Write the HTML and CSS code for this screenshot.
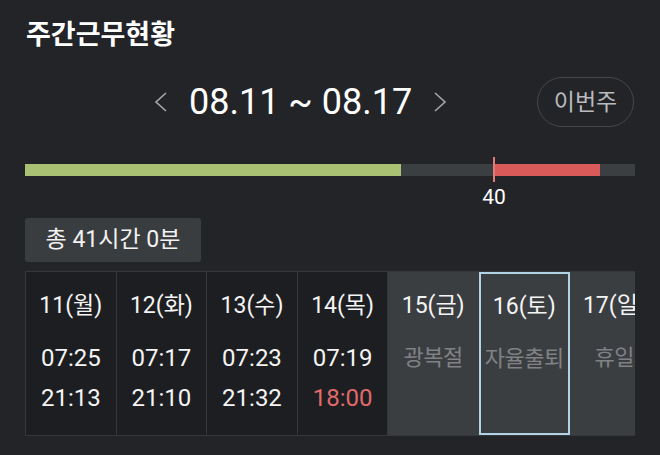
FILE: index.html
```html
<!DOCTYPE html>
<html lang="ko">
<head>
<meta charset="utf-8">
<link rel="stylesheet" href="styles.css">
</head>
<body>
<div class="page">
  <h1 class="title">주간근무현황</h1>

  <div class="nav-row">
    <div class="nav">
      <svg class="chev" width="14" height="22" viewBox="0 0 14 22"><polyline points="12,2 2,11 12,20" fill="none" stroke="#a7a8ab" stroke-width="1.6"/></svg>
      <span class="range">08.11 ~ 08.17</span>
      <svg class="chev" width="14" height="22" viewBox="0 0 14 22"><polyline points="2,2 12,11 2,20" fill="none" stroke="#a7a8ab" stroke-width="1.6"/></svg>
    </div>
    <button class="this-week">이번주</button>
  </div>

  <div class="bar">
    <div class="seg green" style="width:376px"></div>
    <div class="seg track" style="width:93px"></div>
    <div class="seg red" style="width:106px"></div>
    <div class="seg track rest"></div>
    <div class="marker" style="left:468px"><span class="marker-label">40</span></div>
  </div>

  <div class="total">총 41시간 0분</div>

  <div class="week">
    <div class="day">
      <div class="dname">11(월)</div>
      <div class="t">07:25</div>
      <div class="t">21:13</div>
    </div>
    <div class="day">
      <div class="dname">12(화)</div>
      <div class="t">07:17</div>
      <div class="t">21:10</div>
    </div>
    <div class="day">
      <div class="dname">13(수)</div>
      <div class="t">07:23</div>
      <div class="t">21:32</div>
    </div>
    <div class="day">
      <div class="dname">14(목)</div>
      <div class="t">07:19</div>
      <div class="t late">18:00</div>
    </div>
    <div class="day off">
      <div class="dname">15(금)</div>
      <div class="t note">광복절</div>
    </div>
    <div class="day off selected">
      <div class="dname">16(토)</div>
      <div class="t note">자율출퇴</div>
    </div>
    <div class="day off">
      <div class="dname">17(일)</div>
      <div class="t note">휴일</div>
    </div>
  </div>
</div>
</body>
</html>
```
FILE: styles.css
```css
* { box-sizing: border-box; }
html, body {
  margin: 0;
  padding: 0;
  background: #232428;
}
body {
  width: 660px;
  height: 455px;
  overflow: hidden;
  font-family: Roboto, "Noto Sans CJK KR", sans-serif;
  color: #f2f2f2;
}
.page {
  padding: 22px 25px 0 25px;
}
.title {
  margin: 0 0 0 1px;
  font-size: 27px;
  line-height: 26px;
  font-weight: 700;
  color: #ffffff;
}
.nav-row {
  margin-top: 29px;
  display: flex;
  align-items: center;
  justify-content: space-between;
  height: 50px;
}
.nav {
  display: flex;
  align-items: center;
  padding-left: 129px;
  gap: 21px;
}
.chev { display: block; }
.range {
  font-size: 36px;
  line-height: 40px;
  color: #ffffff;
}
.this-week {
  width: 97px;
  height: 50px;
  margin-right: 1px;
  border: 1.5px solid #46474b;
  border-radius: 25px;
  background: transparent;
  color: #b9babd;
  font-family: Roboto, "Noto Sans CJK KR", sans-serif;
  font-size: 23px;
  line-height: 1;
  padding: 0;
}
.bar {
  position: relative;
  margin-top: 37px;
  height: 12px;
  width: 610px;
  display: flex;
}
.seg { height: 12px; }
.green { background: #a8c172; }
.red { background: #da5a59; }
.track { background: #3c3f42; }
.rest { flex: 1; }
.marker {
  position: absolute;
  top: -7px;
  width: 2px;
  height: 25px;
  background: #e27a78;
}
.marker-label {
  position: absolute;
  top: 28px;
  left: 50%;
  transform: translateX(-50%);
  font-size: 21px;
  line-height: 24px;
  color: #ffffff;
}
.total {
  margin-top: 42px;
  width: 176px;
  height: 44px;
  background: #3a3d40;
  border-radius: 3px;
  font-size: 23px;
  line-height: 44px;
  text-align: center;
  color: #f2f2f2;
}
.week {
  margin-top: 9px;
  width: 610px;
  height: 165px;
  display: flex;
  overflow: hidden;
  border: 1px solid #36373a;
  border-right: none;
  background: #1d1e21;
}
.day {
  flex: 0 0 90.6px;
  border-right: 1px solid #36373a;
  text-align: center;
  padding-top: 19px;
  white-space: nowrap;
}
.dname {
  font-size: 23px;
  line-height: 30px;
  margin-bottom: 17px;
  color: #f4f4f4;
}
.t {
  font-size: 24px;
  line-height: 40px;
  color: #f4f4f4;
}
.late { color: #e06a69; }
.off {
  background: #3b3e41;
  border-right-color: #3b3e41;
}
.note {
  font-size: 22px;
  color: #808285;
  letter-spacing: -0.5px;
}
.selected {
  border: 2px solid #b1d3e8;
  padding-top: 18px;
}
```
